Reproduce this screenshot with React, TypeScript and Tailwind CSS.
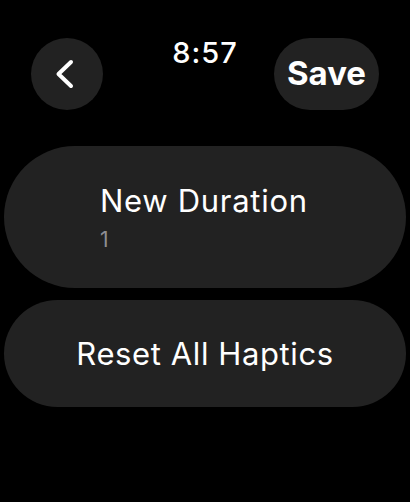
// Watch-style edit screen: back / time / save header and two pill rows
export default function App() {
  return (
    <div className="min-h-[502px] w-[410px] bg-black pt-[38px] text-white" style={{ fontFamily: 'Inter, "Noto Sans", sans-serif' }}>
      {/* Header */}
      <div className="grid grid-cols-[1fr_auto_1fr] items-start px-[31px]">
        <div className="flex">
          <button className="h-[72px] w-[72px] rounded-full bg-[#222222]">
            <svg width="72" height="72" viewBox="0 0 72 72" fill="none">
              <path d="M40 24 L27.5 36 L40 48" stroke="white" strokeWidth="4" strokeLinecap="round" strokeLinejoin="round" />
            </svg>
          </button>
        </div>
        <div className="text-[29px] font-medium leading-[29px] tracking-[1px]">8:57</div>
        <div className="flex justify-end">
          <button className="flex h-[72px] w-[105px] items-center justify-center rounded-full bg-[#222222] text-[33px] font-bold">
            Save
          </button>
        </div>
      </div>

      {/* Rows */}
      <div className="mt-[36px] flex flex-col gap-[12px] px-[4px]">
        <div className="flex flex-col rounded-full bg-[#222222] py-9 pl-[96px]">
          <span className="text-[31px] leading-[37px] tracking-[0.7px]">New Duration</span>
          <span className="mt-2 text-[21px] leading-[25px] text-[#8e8e93]">1</span>
        </div>
        <div className="flex h-[107px] items-center justify-center rounded-full bg-[#222222] text-[31px] leading-[37px] tracking-[0.6px]">
          Reset All Haptics
        </div>
      </div>
    </div>
  )
}
